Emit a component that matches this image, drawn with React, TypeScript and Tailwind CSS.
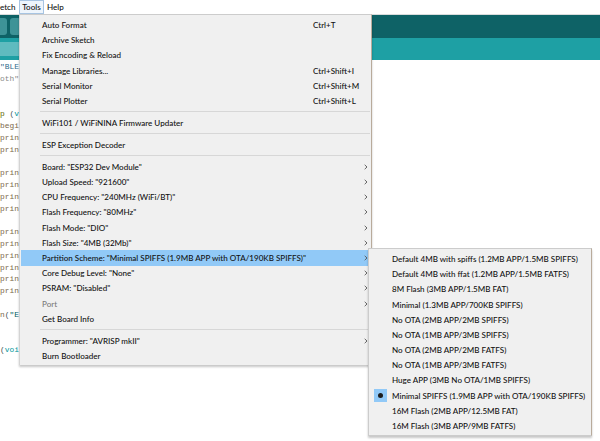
import React from 'react';

type Entry = { label?: string; key?: string; sub?: boolean; disabled?: boolean; active?: boolean; sep?: boolean };

const TOOLS: Entry[] = [
  { label: 'Auto Format', key: 'Ctrl+T' },
  { label: 'Archive Sketch' },
  { label: 'Fix Encoding & Reload' },
  { label: 'Manage Libraries...', key: 'Ctrl+Shift+I' },
  { label: 'Serial Monitor', key: 'Ctrl+Shift+M' },
  { label: 'Serial Plotter', key: 'Ctrl+Shift+L' },
  { sep: true },
  { label: 'WiFi101 / WiFiNINA Firmware Updater' },
  { sep: true },
  { label: 'ESP Exception Decoder' },
  { sep: true },
  { label: 'Board: "ESP32 Dev Module"', sub: true },
  { label: 'Upload Speed: "921600"', sub: true },
  { label: 'CPU Frequency: "240MHz (WiFi/BT)"', sub: true },
  { label: 'Flash Frequency: "80MHz"', sub: true },
  { label: 'Flash Mode: "DIO"', sub: true },
  { label: 'Flash Size: "4MB (32Mb)"', sub: true },
  { label: 'Partition Scheme: "Minimal SPIFFS (1.9MB APP with OTA/190KB SPIFFS)"', sub: true, active: true },
  { label: 'Core Debug Level: "None"', sub: true },
  { label: 'PSRAM: "Disabled"', sub: true },
  { label: 'Port', sub: true, disabled: true },
  { label: 'Get Board Info' },
  { sep: true },
  { label: 'Programmer: "AVRISP mkII"', sub: true },
  { label: 'Burn Bootloader' },
];

const SCHEMES = [
  'Default 4MB with spiffs (1.2MB APP/1.5MB SPIFFS)',
  'Default 4MB with ffat (1.2MB APP/1.5MB FATFS)',
  '8M Flash (3MB APP/1.5MB FAT)',
  'Minimal (1.3MB APP/700KB SPIFFS)',
  'No OTA (2MB APP/2MB SPIFFS)',
  'No OTA (1MB APP/3MB SPIFFS)',
  'No OTA (2MB APP/2MB FATFS)',
  'No OTA (1MB APP/3MB FATFS)',
  'Huge APP (3MB No OTA/1MB SPIFFS)',
  'Minimal SPIFFS (1.9MB APP with OTA/190KB SPIFFS)',
  '16M Flash (2MB APP/12.5MB FAT)',
  '16M Flash (3MB APP/9MB FATFS)',
];

// code fragments peeking out left of the menu: [text, colour][]
const CODE: [string, string][][] = [
  [['"BLE', '#2f6a8c']],
  [['oth"', '#8a8a8a']],
  [],
  [],
  [['p', '#5e6d03'], [' (', '#434f54'], ['void', '#00979c']],
  [['begin', '#7d6a4b']],
  [['print', '#7d6a4b']],
  [['print', '#7d6a4b']],
  [],
  [['print', '#7d6a4b']],
  [['print', '#7d6a4b']],
  [['print', '#7d6a4b']],
  [['print', '#7d6a4b']],
  [],
  [['print', '#7d6a4b']],
  [['print', '#7d6a4b']],
  [['print', '#7d6a4b']],
  [['print', '#7d6a4b']],
  [['print', '#7d6a4b']],
  [['print', '#7d6a4b']],
  [],
  [['n', '#7d6a4b'], ['(', '#434f54'], ['"ESP', '#005c5f']],
  [],
  [],
  [['(', '#434f54'], ['void', '#00979c']],
];

function Chevron() {
  return (
    <svg width="4" height="6" viewBox="0 0 4 6" className="shrink-0">
      <path d="M0.7 0.8 L3 3 L0.7 5.2" fill="none" stroke="#555555" strokeWidth="0.9" />
    </svg>
  );
}

function ToolsMenu() {
  return (
    <div className="absolute left-[19px] top-[14px] w-[353px] h-[351px] bg-[#f0f0f0] border-l border-t border-r border-l-[#d4d4d4] border-t-[#cccccc] border-r-[#b9ab9b] shadow-[0_2px_2px_rgba(0,0,0,0.22)] pt-[2.4px]">
      {TOOLS.map((it, i) =>
        it.sep ? (
          <div key={i} className="h-[6.8px] flex items-center pl-[20px] pr-[1px]">
            <div className="h-px w-full bg-[#d7d7d7]" />
          </div>
        ) : (
          <div
            key={i}
            className={`h-[15.2px] mx-[1px] flex items-center pl-[21px] pr-[2px] ${it.active ? 'bg-[#91c9f7]' : ''}`}
          >
            <span className={`w-[271px] shrink-0 whitespace-nowrap ${it.disabled ? 'text-[#7a7a7a]' : ''}`}>{it.label}</span>
            <span className="flex-1 whitespace-nowrap">{it.key}</span>
            {it.sub && <Chevron />}
          </div>
        )
      )}
    </div>
  );
}

function SchemeMenu() {
  return (
    <div className="absolute left-[368px] top-[248px] w-[224px] h-[188px] bg-[#f0f0f0] border border-[#cccccc] border-r-[#b9ab9b] shadow-[0_2px_2px_rgba(0,0,0,0.22)] pt-[2.4px]">
      {SCHEMES.map((s, i) => (
        <div key={i} className="h-[15.2px] flex items-center">
          <div className="w-[23px] flex justify-center items-center">
            {i === 9 && (
              <div className="w-[13px] h-[13px] bg-[#91c9f7] flex items-center justify-center">
                <div className="w-[5px] h-[5px] rounded-full bg-[#1c1c1c]" />
              </div>
            )}
          </div>
          <span className="whitespace-nowrap">{s}</span>
        </div>
      ))}
    </div>
  );
}

export default function App() {
  return (
    <div className="relative w-[600px] h-[441px] overflow-hidden bg-white text-[#111111] text-[8.05px] font-medium font-['Lato','Liberation_Sans',sans-serif]">
      {/* Menu bar */}
      <div className="h-[14px] flex items-center bg-white">
        <span className="w-[19px]">etch</span>
        <span className="h-[14px] w-[25px] flex items-center justify-center border border-[#a7c4e2] bg-[#eef5fc]">Tools</span>
        <span className="ml-[3px]">Help</span>
      </div>
      <div className="h-px bg-[#d9dcdc]" />

      {/* Toolbar + tab strip */}
      <div className="h-[23px] bg-[#0e6266] flex items-center gap-[3px] -ml-[4px]">
        <div className="w-[11px] h-[17px] rounded-[3px] bg-[#3e9397]" />
        <div className="w-[11px] h-[17px] rounded-[3px] bg-[#3e9397]" />
      </div>
      <div className="h-[22px] bg-[#1ea0a4] flex items-center">
        <div className="w-[19px] h-[14px] bg-[#5fbbbf]" />
      </div>

      {/* Editor */}
      <div className="pt-[1.1px] font-normal font-['Liberation_Mono',monospace] text-[7.9px]">
        {CODE.map((line, i) => (
          <div key={i} className="h-[11.8px] leading-[11.8px] whitespace-pre">
            {line.map(([t, c], j) => (
              <span key={j} style={{ color: c }}>
                {t}
              </span>
            ))}
          </div>
        ))}
      </div>

      <ToolsMenu />
      <SchemeMenu />
    </div>
  );
}
